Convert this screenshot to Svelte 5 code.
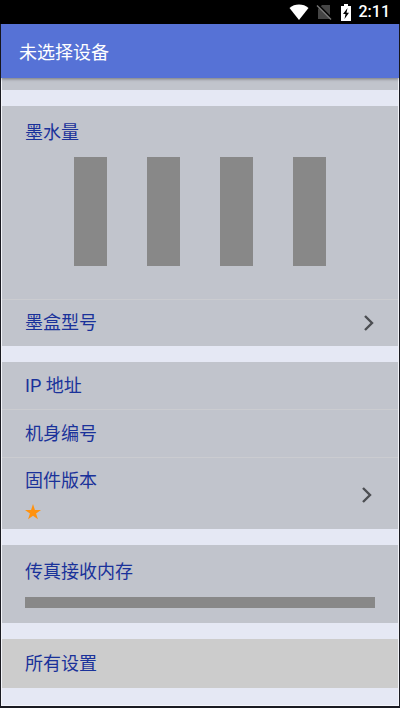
<script lang="ts">
  type Row = { label: string; chevron?: boolean; star?: boolean };

  const inkLevels: number[] = [100, 100, 100, 100];
  const deviceRows: Row[] = [
    { label: 'IP 地址' },
    { label: '机身编号' },
    { label: '固件版本', chevron: true, star: true }
  ];
</script>

{#snippet chevronIcon()}
  <svg class="chevron" viewBox="0 0 12 18" aria-hidden="true">
    <path d="M2 2l7 7-7 7" fill="none" stroke="#4c4e52" stroke-width="2.4" />
  </svg>
{/snippet}

<div class="screen">
  <div class="status">
    <svg class="wifi" viewBox="0 0 20 16" aria-hidden="true">
      <path d="M0.500 4C5.500-0.600 14.500-0.600 19.500 4L10 16z" fill="#fff" />
    </svg>
    <svg class="sim" viewBox="0 0 16 16" aria-hidden="true">
      <path d="M6 1h8v14H2V5z" fill="#454545" />
      <path d="M1.500 0l14 14" stroke="#000" stroke-width="1.6" />
      <path d="M1 1.500l14 14" stroke="#777" stroke-width="1.4" />
    </svg>
    <svg class="battery" viewBox="0 0 12 17" aria-hidden="true">
      <path d="M4 0h4v2h3v15H1V2h3z" fill="#fff" />
      <path d="M7.500 4L3 10h2.500L4.500 15 9 8.800H6.500z" fill="#000" />
    </svg>
    <span class="clock">2:11</span>
  </div>

  <div class="frame">
    <header><h1>未选择设备</h1></header>

    <main>
      <div class="card stub"></div>

      <section class="card">
        <div class="ink">
          <h2>墨水量</h2>
          <div class="bars">
            {#each inkLevels as level}
              <div class="bar"><div class="fill" style="height: {level}%"></div></div>
            {/each}
          </div>
        </div>
        <button class="row model">
          <span>墨盒型号</span>
          {@render chevronIcon()}
        </button>
      </section>

      <section class="card">
        {#each deviceRows as row}
          <button class="row" class:tall={row.star}>
            <span class="text">
              <span>{row.label}</span>
              {#if row.star}
                <svg class="star" viewBox="0 0 24 24" aria-hidden="true">
                  <path d="M12 17.800L19.400 23 16.600 14.300 24 9H14.900L12 0 9.100 9H0l7.400 5.300L4.600 23z" fill="#ff920f" />
                </svg>
              {/if}
            </span>
            {#if row.chevron}
              {@render chevronIcon()}
            {/if}
          </button>
        {/each}
      </section>

      <section class="card fax">
        <h2>传真接收内存</h2>
        <div class="memory"></div>
      </section>

      <section class="card plain">
        <button class="row"><span>所有设置</span></button>
      </section>
    </main>
  </div>
</div>

<style>
  :global(body) { background: #000; }

  .screen {
    display: flex;
    flex-direction: column;
    min-height: 100vh;
    box-sizing: border-box;
    padding-bottom: 2px;
    background: #1a1b22;
    font-family: Roboto, "Noto Sans CJK SC", sans-serif;
  }

  .status {
    display: flex;
    align-items: center;
    justify-content: flex-end;
    height: 24px;
    box-sizing: border-box;
    padding-right: 10px;
    background: #000;
    color: #fff;
  }
  .wifi { width: 20px; height: 16px; margin-right: 7px; }
  .sim { width: 16px; height: 16px; margin-right: 8px; }
  .battery { width: 12px; height: 17px; margin-right: 7px; }
  .clock { font-size: 16px; font-weight: 500; line-height: 24px; }

  .frame {
    flex: 1;
    display: flex;
    flex-direction: column;
    margin: 0 1px;
    border: 1px solid #f4f5fa;
    border-top: 0;
    background: #e5e8f4;
  }

  header {
    display: flex;
    align-items: center;
    height: 54px;
    box-sizing: border-box;
    margin: 0 -1px;
    padding: 3px 18px 0;
    background: #5672d6;
    box-shadow: 0 1px 3px rgba(0, 0, 0, 0.4);
    z-index: 1;
  }
  h1 { margin: 0; font-size: 18px; font-weight: 400; line-height: 24px; color: #fff; }

  main { display: flex; flex-direction: column; gap: 16px; }

  .card { background: #c1c4cc; }
  .card.plain { background: #ccc; }
  .stub { height: 12px; }

  h2, .row {
    margin: 0;
    font-family: inherit;
    font-size: 18px;
    font-weight: 400;
    line-height: 24px;
    color: #1a329a;
  }

  .ink { padding: 15px 23px 33px; }
  .bars { display: flex; justify-content: center; gap: 40px; margin-top: 12px; }
  .bar { display: flex; align-items: flex-end; width: 33px; height: 109px; }
  .fill { width: 100%; background: #888; }

  .row {
    display: flex;
    align-items: center;
    justify-content: space-between;
    width: 100%;
    min-height: 47px;
    box-sizing: border-box;
    padding: 0 23px;
    border: 0;
    background: none;
    text-align: left;
  }
  .row + .row { min-height: 48px; }
  .row + .row, .model { border-top: 1px solid #cbccd0; }
  .tall { height: 72px; padding: 2px 25px 0 23px; }
  .text { display: flex; flex-direction: column; gap: 11px; }
  .chevron { width: 12px; height: 18px; }
  .star { width: 16px; height: 16px; }
  .plain .row { min-height: 49px; }

  .fax { padding: 15px 23px; }
  .memory { height: 11px; margin-top: 13px; background: #888; }
</style>
